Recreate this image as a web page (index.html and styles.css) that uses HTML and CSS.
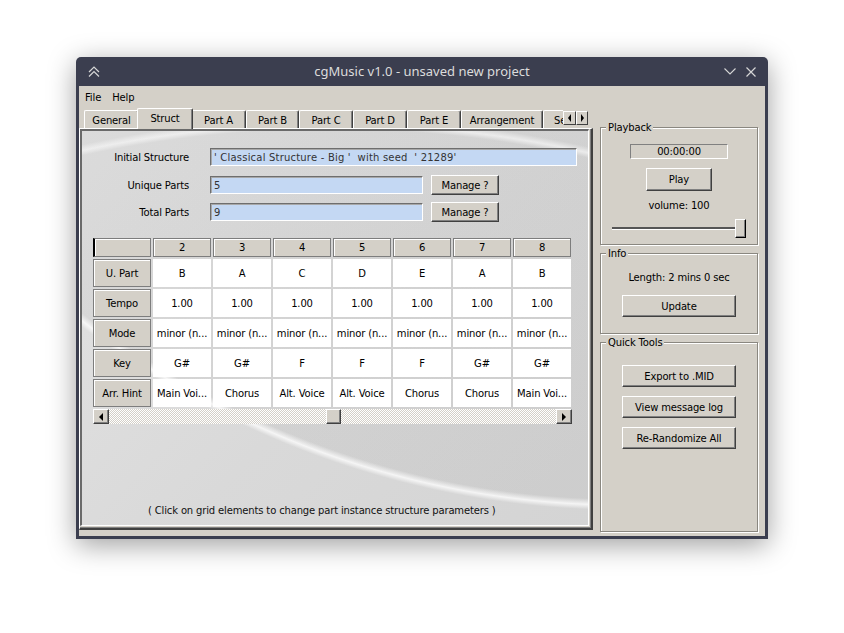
FILE: index.html
```html
<!DOCTYPE html>
<html>
<head>
<meta charset="utf-8">
<link rel="stylesheet" href="styles.css">
</head>
<body>
<div class="window">
  <div class="titlebar">
    <div class="tb-left">
      <svg width="12" height="11" viewBox="0 0 12 11"><path d="M1 6 L6 1 L11 6 M1 10.5 L6 5.5 L11 10.5" fill="none" stroke="#d6d6d6" stroke-width="1.2"/></svg>
    </div>
    <div class="title">cgMusic v1.0 - unsaved new project</div>
    <div class="tb-right">
      <svg width="12" height="7" viewBox="0 0 12 7"><path d="M0.5 0.5 L6 6 L11.5 0.5" fill="none" stroke="#d6d6d6" stroke-width="1.1"/></svg>
      <svg width="10" height="10" viewBox="0 0 10 10"><path d="M0.5 0.5 L9.5 9.5 M9.5 0.5 L0.5 9.5" fill="none" stroke="#d6d6d6" stroke-width="1.2"/></svg>
    </div>
  </div>
  <div class="client">
    <div class="menubar"><span>File</span><span>Help</span></div>
    <div class="main">
      <div class="tabctl">
        <div class="tabstrip">
          <div class="tabs">
            <div class="tab w55">General</div>
            <div class="tab sel">Struct</div>
            <div class="tab w55">Part A</div>
            <div class="tab w53">Part B</div>
            <div class="tab w54">Part C</div>
            <div class="tab w54">Part D</div>
            <div class="tab w54">Part E</div>
            <div class="tab w82">Arrangement</div>
            <div class="tab w60">Sequencing</div>
          </div>
          <div class="tabarrows">
            <div class="tabarrow"><span class="tri-l small"></span></div>
            <div class="tabarrow"><span class="tri-r small"></span></div>
          </div>
        </div>
        <div class="tabpage">
          <div class="tabinner">
            <div class="frow first">
              <label class="flabel">Initial Structure</label>
              <div class="field wide">' Classical Structure - Big '  with seed  ' 21289'</div>
            </div>
            <div class="frow">
              <label class="flabel">Unique Parts</label>
              <div class="field narrow">5</div>
              <div class="btn manage">Manage ?</div>
            </div>
            <div class="frow third">
              <label class="flabel">Total Parts</label>
              <div class="field narrow">9</div>
              <div class="btn manage">Manage ?</div>
            </div>

            <div class="grid">
              <div class="hd corner"></div>
              <div class="hd">2</div><div class="hd">3</div><div class="hd">4</div><div class="hd">5</div><div class="hd">6</div><div class="hd">7</div><div class="hd">8</div>

              <div class="hd rh">U. Part</div>
              <div class="cell">B</div><div class="cell">A</div><div class="cell">C</div><div class="cell">D</div><div class="cell">E</div><div class="cell">A</div><div class="cell">B</div>

              <div class="hd rh">Tempo</div>
              <div class="cell">1.00</div><div class="cell">1.00</div><div class="cell">1.00</div><div class="cell">1.00</div><div class="cell">1.00</div><div class="cell">1.00</div><div class="cell">1.00</div>

              <div class="hd rh">Mode</div>
              <div class="cell">minor (n...</div><div class="cell">minor (n...</div><div class="cell">minor (n...</div><div class="cell">minor (n...</div><div class="cell">minor (n...</div><div class="cell">minor (n...</div><div class="cell">minor (n...</div>

              <div class="hd rh">Key</div>
              <div class="cell">G#</div><div class="cell">G#</div><div class="cell">F</div><div class="cell">F</div><div class="cell">F</div><div class="cell">G#</div><div class="cell">G#</div>

              <div class="hd rh">Arr. Hint</div>
              <div class="cell">Main Voi...</div><div class="cell">Chorus</div><div class="cell">Alt. Voice</div><div class="cell">Alt. Voice</div><div class="cell">Chorus</div><div class="cell">Chorus</div><div class="cell">Main Voi...</div>
            </div>

            <div class="hscroll">
              <div class="sbtn"><span class="tri-l"></span></div>
              <div class="strack"><div class="sthumb"></div></div>
              <div class="sbtn"><span class="tri-r"></span></div>
            </div>

            <div class="hint">( Click on grid elements to change part instance structure parameters )</div>
          </div>
        </div>
      </div>

      <div class="side">
        <fieldset class="group playback">
          <legend>Playback</legend>
          <div class="timer">00:00:00</div>
          <div class="btn play">Play</div>
          <div class="vol">volume: 100</div>
          <div class="slider">
            <div class="groove"></div>
            <div class="thumb"></div>
          </div>
        </fieldset>
        <fieldset class="group info">
          <legend>Info</legend>
          <div class="length">Length: 2 mins 0 sec</div>
          <div class="btn wbtn update">Update</div>
        </fieldset>
        <fieldset class="group tools">
          <legend>Quick Tools</legend>
          <div class="btn wbtn t1">Export to .MID</div>
          <div class="btn wbtn t2">View message log</div>
          <div class="btn wbtn t2">Re-Randomize All</div>
        </fieldset>
      </div>
    </div>
  </div>
</div>
</body>
</html>
```

FILE: styles.css
```css
* { box-sizing: border-box; }
html, body { margin: 0; padding: 0; background: #ffffff; }
body {
  width: 844px; height: 633px; overflow: hidden;
  font-family: "DejaVu Sans", sans-serif; font-size: 10px; color: #000;
  letter-spacing: -0.15px;
}

.window {
  width: 692px;
  margin: 57px 0 0 76px;
  background: #3b3e4f;
  padding: 0 3px 3px 3px;
  border-radius: 5px 5px 0 0;
  box-shadow: 0 6px 28px rgba(0,0,0,0.38);
}
.titlebar {
  height: 29px;
  display: grid;
  grid-template-columns: 1fr auto 1fr;
  align-items: center;
  color: #dcdcdc;
  font-family: "Noto Sans", sans-serif;
  font-size: 13px;
  letter-spacing: 0;
}
.tb-left { padding-left: 9px; display: flex; align-items: center; }
.tb-right { display: flex; justify-content: flex-end; align-items: center; gap: 10px; padding-right: 9px; }
.title { line-height: 29px; }

.client { background: #d4d0c8; height: 450px; }
.menubar { height: 20px; display: flex; align-items: center; padding-left: 6px; gap: 11px; padding-top: 2px; }

.main { display: flex; align-items: flex-start; }
.tabctl { width: 514px; }

.tabstrip { height: 23px; margin-bottom: -1px; display: flex; position: relative; z-index: 1; }
.tabs { width: 484px; height: 23px; overflow: hidden; display: flex; padding-left: 5px; }
.tab {
  flex: none;
  height: 18px; margin-top: 4px;
  background: #d4d0c8;
  border-top: 1px solid #fff; border-left: 1px solid #fff; border-right: 1px solid #404040;
  box-shadow: inset -1px 0 0 #808080;
  border-radius: 2px 2px 0 0;
  display: flex; align-items: center; justify-content: center;
  white-space: nowrap; overflow: hidden;
  padding-top: 1px;
}
.tab.sel {
  width: 56px; height: 21px; margin-top: 2px;
  margin-left: -2px; margin-right: -2px;
  position: relative; z-index: 2;
  padding-bottom: 2px;
}
.w53 { width: 53px; } .w54 { width: 54px; } .w55 { width: 55px; } .w60 { width: 60px; justify-content: flex-start; padding-left: 10px; } .w82 { width: 82px; }

.tabarrows { display: flex; margin-top: 5px; height: 14px; }
.tabarrow {
  width: 13px; height: 14px; background: #d4d0c8;
  border: 1px solid; border-color: #fff #404040 #404040 #fff;
  display: flex; align-items: center; justify-content: center;
}
.tabarrow + .tabarrow { width: 12px; }

.tri-l, .tri-r { width: 0; height: 0; border-top: 4px solid transparent; border-bottom: 4px solid transparent; }
.tri-l { border-right: 4px solid #000; }
.tri-r { border-left: 4px solid #000; }
.tri-l.small { border-right-width: 3px; }
.tri-r.small { border-left-width: 3px; }

.tabpage {
  width: 514px; height: 402px;
  border-left: 1px solid #fff; border-top: 1px solid #fff;
  border-right: 2px solid #404040; border-bottom: 2px solid #404040;
  box-shadow: inset -1px -1px 0 #808080;
  padding: 0 2px 2px 0;
}
.tabinner {
  height: 397px;
  border-top: 2px solid #6a6a6a; border-left: 2px solid #6a6a6a;
  border-right: 1px solid #fff; border-bottom: 1px solid #fff;
  background:
    radial-gradient(circle at 541px -512px, rgba(255,255,255,0) 880px, rgba(255,255,255,0.75) 886px, rgba(255,255,255,0) 891px),
    radial-gradient(circle at 541px -512px, rgba(0,0,0,0.035) 885px, rgba(0,0,0,0) 886px),
    radial-gradient(circle at 248px 1162px, rgba(255,255,255,0) 1164px, rgba(255,255,255,0.7) 1169px, rgba(255,255,255,0) 1175px),
    linear-gradient(135deg, #e3e3e3 0%, #d9d9d9 55%, #d4d4d4 100%);
  overflow: hidden;
}

.frow { display: flex; align-items: center; height: 20px; margin-top: 8px; }
.frow.first { margin-top: 16px; }
.frow.third { margin-top: 7px; }
.flabel { width: 107px; text-align: right; margin-right: 21px; }
.field {
  height: 18px; background: #c4d8f3;
  border: 1px solid; border-color: #6e6e6e #fff #fff #6e6e6e;
  box-shadow: inset 1px 1px 0 #a8a8a8;
  padding: 0 3px; color: #333;
  display: flex; align-items: center;
  white-space: pre;
  letter-spacing: 0.2px;
}
.wide { width: 367px; }
.narrow { width: 213px; }

.btn {
  background: #d4d0c8;
  border: 1px solid; border-color: #fff #404040 #404040 #fff;
  box-shadow: inset -1px -1px 0 #808080;
  display: flex; align-items: center; justify-content: center;
  white-space: nowrap;
}
.manage { width: 68px; height: 20px; margin-left: 8px; }

.grid {
  margin: 16px 0 0 11px;
  display: grid;
  grid-template-columns: repeat(8, 58px);
  grid-template-rows: 19px repeat(5, 28px);
  gap: 2px;
  width: 478px;
}
.hd {
  background: #d4d0c8;
  border: 1px solid #7d7d7d;
  box-shadow: inset 1px 1px 0 #fff;
  display: flex; align-items: center; justify-content: center;
}
.rh, .cell { padding-top: 1px; }
.corner { border-left: 2px solid #000; }
.cell {
  background: #fff;
  display: flex; align-items: center; justify-content: center;
  white-space: nowrap; overflow: hidden;
}

.hscroll { width: 479px; height: 15px; margin: 2px 0 0 11px; display: flex; }
.sbtn {
  width: 16px; height: 15px; background: #d4d0c8;
  border: 1px solid; border-color: #fff #404040 #404040 #fff;
  box-shadow: inset -1px -1px 0 #808080;
  display: flex; align-items: center; justify-content: center;
}
.strack {
  flex: 1;
  background-color: #fff;
  background-image: repeating-conic-gradient(#d4d0c8 0 25%, #fff 0 50%);
  background-size: 2px 2px;
}
.sthumb {
  width: 15px; height: 15px; margin-left: 217px; background: #d4d0c8;
  border: 1px solid; border-color: #fff #404040 #404040 #fff;
  box-shadow: inset -1px -1px 0 #808080;
}

.hint { margin-top: 81px; padding-left: 66px; line-height: 12px; color: #111; }

/* right column */
.side { width: 158px; margin-left: 7px; padding-top: 14px; }
.group {
  margin: 0; padding: 0;
  border: 1px solid #8a8780;
  box-shadow: inset 1px 1px 0 #fff, 1px 1px 0 #fff;
  display: flex; flex-direction: column; align-items: center;
  min-width: 0;
}
.group legend {
  margin-left: 5px; padding: 2px 2px 1px;
  line-height: 12px; height: 15px;
  background: #d4d0c8;
}
.playback { height: 125px; }
.info { height: 88px; margin-top: 1px; }
.tools { height: 197px; margin-top: 1px; }

.timer {
  width: 98px; height: 15px; margin-top: 9px;
  border: 1px solid; border-color: #808080 #fff #fff #808080;
  display: flex; align-items: center; justify-content: center;
}
.play { width: 66px; height: 23px; margin-top: 9px; }
.vol { margin-top: 9px; line-height: 12px; }
.slider { width: 100%; height: 19px; margin-top: 7px; display: flex; align-items: center; padding: 0 11px; }
.groove { flex: 1; height: 3px; border-top: 2px solid #555; border-bottom: 1px solid #fff; background: #808080; }
.thumb {
  width: 11px; height: 19px; background: #d4d0c8;
  border: 1px solid; border-color: #fff #000 #000 #fff;
  box-shadow: inset -1px -1px 0 #808080;
}

.length { margin-top: 11px; line-height: 12px; }
.wbtn { width: 114px; height: 22px; }
.update { margin-top: 11px; }
.t1 { margin-top: 15px; }
.t2 { margin-top: 9px; }
```
